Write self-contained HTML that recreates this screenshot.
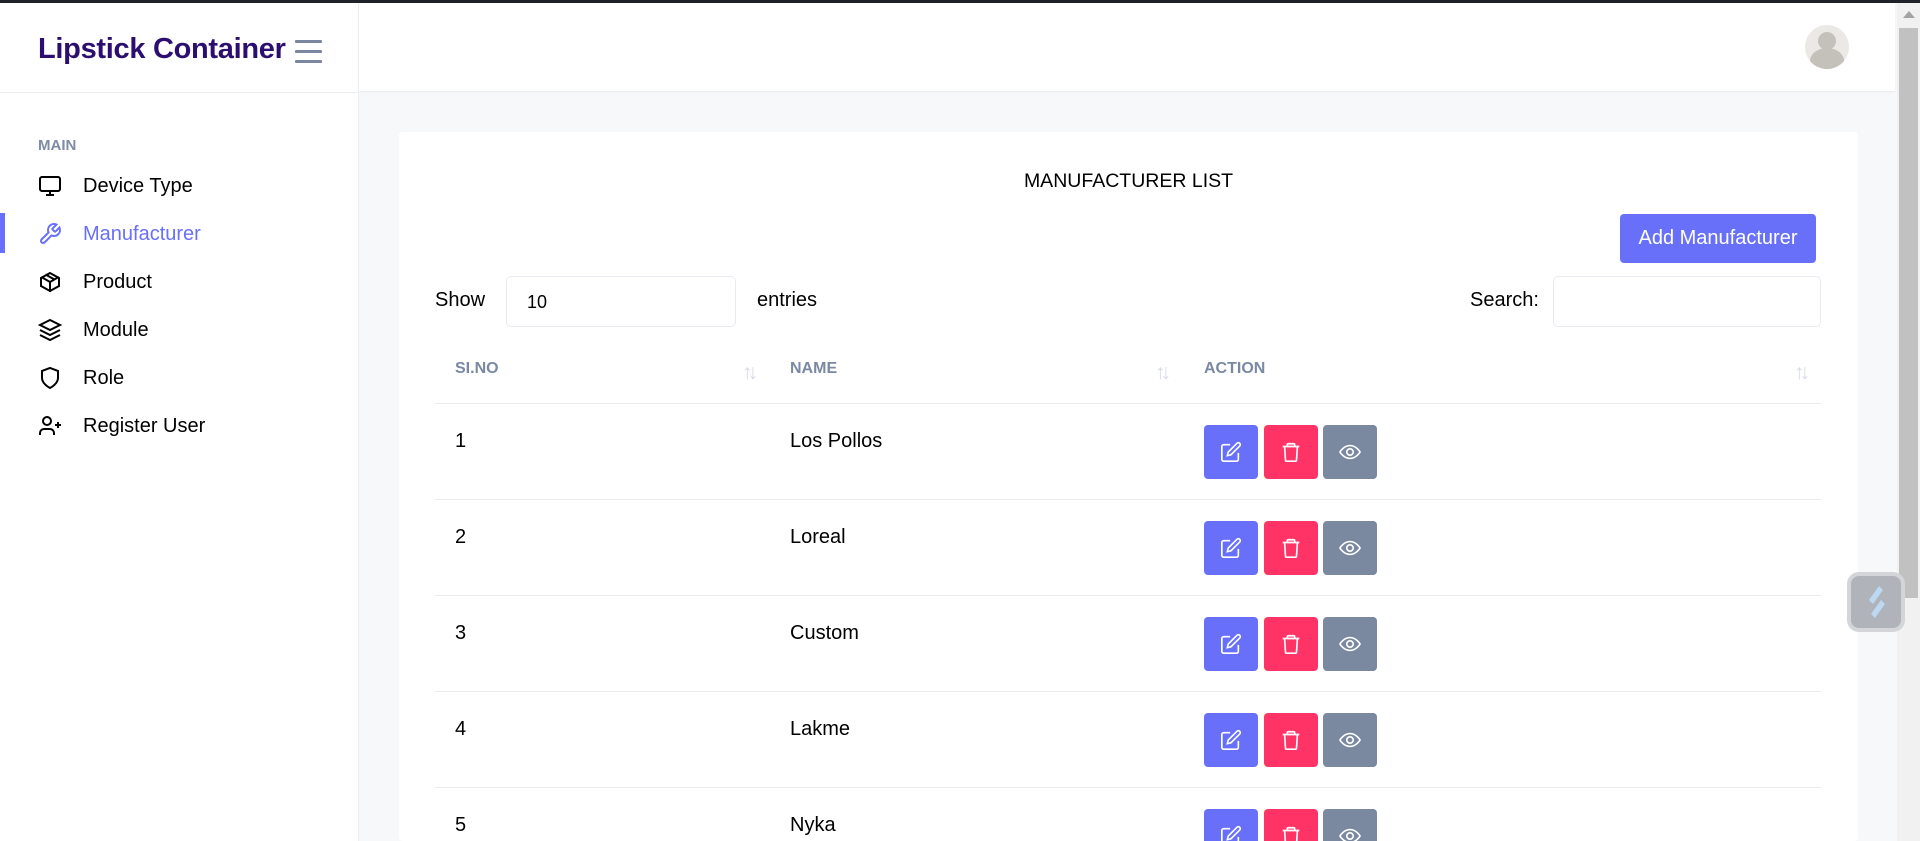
<!DOCTYPE html>
<html><head><meta charset="utf-8"><style>
*{box-sizing:border-box;margin:0;padding:0}
html,body{width:1920px;height:841px;overflow:hidden}
body{background:#f7f8fa;font-family:"Liberation Sans",Roboto,sans-serif;position:relative;color:#000}
.top{position:absolute;left:0;top:0;width:1920px;height:3px;background:#1f2329}
.side{position:absolute;left:0;top:3px;width:359px;height:838px;background:#fff;border-right:1px solid #eceef2}
.hdr{position:absolute;left:359px;top:3px;width:1536px;height:89px;background:#fff;border-bottom:1px solid #eceef2;box-shadow:0 1px 4px rgba(0,0,0,.03)}
.logo{position:absolute;left:38px;top:30px;font-size:29px;font-weight:bold;color:#2b0e70;letter-spacing:-.3px}
.ham{position:absolute;left:295px;top:37px;width:27px}
.ham i{display:block;height:3px;background:#7b86a0;margin-bottom:7px;border-radius:1px}
.sline{position:absolute;left:0;top:89px;width:359px;border-top:1px solid #eceef2}
.main{position:absolute;left:38px;top:134px;font-size:15px;font-weight:bold;color:#7e8ba3}
.nav{position:absolute;left:0;width:359px;height:40px;font-size:20px;color:#000}
.nav span{position:absolute;left:83px;top:10px}
.nav svg{position:absolute;left:38px;top:9px}
.act{color:#6870fa}
.bar{position:absolute;left:0;top:0;width:5px;height:40px;background:#6870fa}
.card{position:absolute;left:399px;top:132px;width:1459px;height:709px;background:#fff;border-radius:4px;overflow:hidden}
.ttl{position:absolute;left:0;width:100%;top:38px;text-align:center;font-size:19.5px}
.btn{position:absolute;left:1221px;top:82px;width:196px;height:49px;background:#6870fa;color:#fff;border-radius:4px;font-size:20px;text-align:center;line-height:49px}
.lbl{position:absolute;font-size:20px}
.inp{position:absolute;border:1px solid #e8ebf1;border-radius:5px;height:51px;font-size:18px;padding:15px 0 0 20px}
.th{position:absolute;top:228px;font-size:16px;font-weight:bold;color:#7b88a4}
.arr{position:absolute;top:229px;font-size:21px;color:#d6dbe5;letter-spacing:-5px}
.hl{position:absolute;left:36px;width:1386px;border-top:1px solid #e8ebf0}
.td{position:absolute;font-size:20px}
.ab{position:absolute;width:54px;height:54px;border-radius:4px}
.ab svg{position:absolute;left:16px;top:16px}
.sb{position:absolute;left:1897px;top:3px;width:23px;height:838px;background:#f1f1f1}
.thumb{position:absolute;left:1899px;top:28px;width:19px;height:570px;background:#c1c1c1}
.wid{position:absolute;left:1847px;top:572px;width:58px;height:60px;border-radius:12px;background:#b0b3ba;border:4px solid #d3d5d9}
</style></head><body>
<div class="top"></div>
<div class="side">
<div class="logo">Lipstick Container</div>
<div class="ham"><i></i><i></i><i></i></div>
<div class="sline"></div>
<div class="main">MAIN</div>
<div class="nav" style="top:162px"><svg width="24" height="24" viewBox="0 0 24 24" fill="none" stroke="#000" stroke-width="2"><rect x="2" y="3" width="20" height="14" rx="2"/><path d="M8 21h8M12 17v4"/></svg><span>Device Type</span></div>
<div class="nav act" style="top:210px"><div class="bar"></div><svg width="24" height="24" viewBox="0 0 24 24" fill="none" stroke="#6870fa" stroke-width="2"><path d="M14.7 6.3a1 1 0 000 1.4l1.6 1.6a1 1 0 001.4 0l3.77-3.770a6 6 0 01-7.94 7.94l-6.91 6.91a2.12 2.12 0 01-3-3l6.91-6.91a6 6 0 017.940-7.94l-3.76 3.76z"/></svg><span>Manufacturer</span></div>
<div class="nav" style="top:258px"><svg width="24" height="24" viewBox="0 0 24 24" fill="none" stroke="#000" stroke-width="2"><path d="M21 16V8l-9-5-9 5v8l9 5 9-5z"/><path d="M3.3 7L12 12l8.7-5M12 22V12M7.5 4.5l9 5"/></svg><span>Product</span></div>
<div class="nav" style="top:306px"><svg width="24" height="24" viewBox="0 0 24 24" fill="none" stroke="#000" stroke-width="2"><path d="M12 2L2 7l10 5 10-5-10-5zM2 17l10 5 10-5M2 12l10 5 10-5"/></svg><span>Module</span></div>
<div class="nav" style="top:354px"><svg width="24" height="24" viewBox="0 0 24 24" fill="none" stroke="#000" stroke-width="2"><path d="M12 22s8-4 8-10V5l-8-3-8 3v7c0 6 8 10 8 10z"/></svg><span>Role</span></div>
<div class="nav" style="top:402px"><svg width="26" height="24" viewBox="0 0 26 24" fill="none" stroke="#000" stroke-width="2"><path d="M16 21v-2a4 4 0 00-4-4H6a4 4 0 00-4 4v2"/><circle cx="9" cy="7" r="4"/><path d="M20 8v6M23 11h-6"/></svg><span>Register User</span></div>
</div>
<div class="hdr"><svg style="position:absolute;left:1446px;top:22px" width="44" height="44" viewBox="0 0 44 44"><circle cx="22" cy="22" r="22" fill="#ebe9e6"/><circle cx="22" cy="16" r="9" fill="#c4c1bb"/><path d="M5 36a17 13 0 0134 0a22 22 0 01-34 0z" fill="#c4c1bb"/></svg></div>
<div class="card">
<div class="ttl">MANUFACTURER LIST</div>
<div class="btn">Add Manufacturer</div>
<div class="lbl" style="left:36px;top:157px">Show</div>
<div class="inp" style="left:107px;top:144px;width:230px">10</div>
<div class="lbl" style="left:358px;top:157px">entries</div>
<div class="lbl" style="left:1071px;top:157px">Search:</div>
<div class="inp" style="left:1154px;top:144px;width:268px"></div>
<div class="th" style="left:56px">SI.NO</div><div class="arr" style="left:343px">↑↓</div>
<div class="th" style="left:391px">NAME</div><div class="arr" style="left:756px">↑↓</div>
<div class="th" style="left:805px">ACTION</div><div class="arr" style="left:1395px">↑↓</div>
<div class="hl" style="top:271px"></div>
<div id="rows"></div>
</div>
<div class="sb"><div style="position:absolute;left:6px;top:8px;border:6px solid transparent;border-bottom:7px solid #a3a3a3;border-top:0"></div></div>
<div class="thumb"></div>
<div class="wid"><svg width="50" height="52" viewBox="0 0 50 52"><path d="M28 10l-10 14 4 4 10-14z" fill="#bcd8f2"/><path d="M30 24l-10 14 4 4 10-14z" fill="#bcd8f2"/></svg></div>
<script>
var n=["Los Pollos","Loreal","Custom","Lakme","Nyka"],h="";
for(var i=0;i<5;i++){var t=271+i*96;
h+='<div class="td" style="left:56px;top:'+(t+27)+'px">'+(i+1)+'</div><div class="td" style="left:391px;top:'+(t+27)+'px">'+n[i]+'</div>';
var b=t+22;
h+='<div class="ab" style="left:805px;top:'+b+'px;background:#6870fa"><svg width="22" height="22" viewBox="0 0 24 24" fill="none" stroke="#fff" stroke-width="1.8"><path d="M11 4H4a2 2 0 00-2 2v14a2 2 0 002 2h14a2 2 0 002-2v-7"/><path d="M18.5 2.5a2.1 2.1 0 013 3L12 15l-4 1 1-4 9.5-9.5z"/></svg></div>';
h+='<div class="ab" style="left:865px;top:'+b+'px;background:#ff3366"><svg width="22" height="22" viewBox="0 0 24 24" fill="none" stroke="#fff" stroke-width="1.8"><path d="M3 6h18M8 6V4a1 1 0 011-1h6a1 1 0 011 1v2M5 6l1 15a1 1 0 001 1h10a1 1 0 001-1l1-15"/></svg></div>';
h+='<div class="ab" style="left:924px;top:'+b+'px;background:#7a88a0"><svg width="22" height="22" viewBox="0 0 24 24" fill="none" stroke="#fff" stroke-width="1.8"><path d="M1 12s4-7 11-7 11 7 11 7-4 7-11 7S1 12 1 12z"/><circle cx="12" cy="12" r="3.5"/></svg></div>';
if(i<4)h+='<div class="hl" style="top:'+(t+96)+'px"></div>';}
document.getElementById("rows").innerHTML=h;
</script>
</body></html>
